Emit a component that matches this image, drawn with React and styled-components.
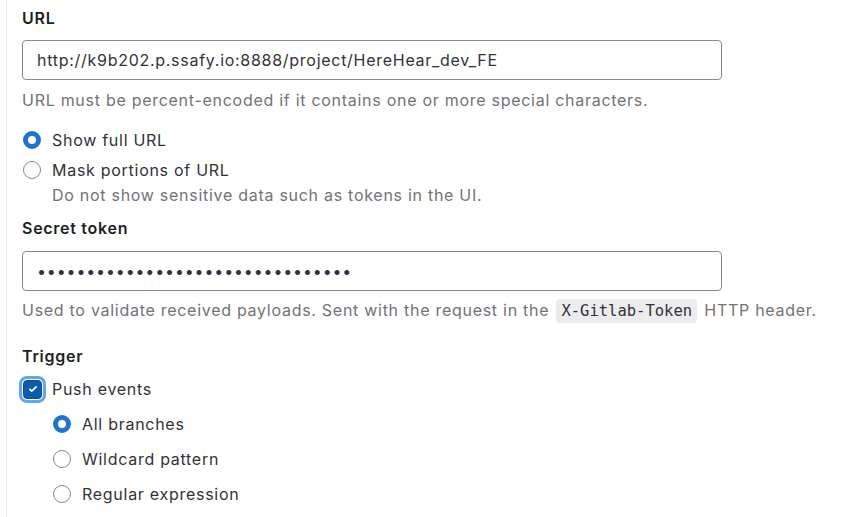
import React, { useState } from 'react';
import styled, { createGlobalStyle } from 'styled-components';

const GlobalStyle = createGlobalStyle`
  body {
    margin: 0;
    background: #fff;
    font-family: Inter, "Noto Sans", sans-serif;
    letter-spacing: 0.72px;
    color: #333238;
  }
`;

const Page = styled.div`
  margin-left: 6px;
  border-left: 1px solid #ececef;
  padding: 8px 0 20px 15px;
  min-height: 517px;
  box-sizing: border-box;
`;

const Group = styled.div`
  margin-top: ${(p) => p.$mt || 0}px;
`;

const Label = styled.div`
  font-size: 16px;
  font-weight: 600;
  line-height: 20px;
  color: #1f1e24;
  margin-bottom: ${(p) => p.$mb || 12}px;
`;

const Input = styled.input`
  display: block;
  box-sizing: border-box;
  width: 700px;
  height: 40px;
  padding: 0 14px;
  border: 1px solid #89888d;
  border-radius: 4px;
  font-family: Inter, sans-serif;
  font-size: 16px;
  letter-spacing: ${(p) => (p.type === 'password' ? '0.85px' : '0.72px')};
  color: #333238;
  outline: none;
`;

const Help = styled.div`
  font-size: 16px;
  line-height: 20px;
  color: #737278;
  margin-top: ${(p) => p.$mt || 0}px;
  margin-left: ${(p) => p.$indent || 0}px;
`;

const Code = styled.code`
  font-family: "DejaVu Sans Mono", "Liberation Mono", monospace;
  font-size: 15.5px;
  letter-spacing: 0;
  color: #333238;
  background: #ececef;
  border-radius: 4px;
  padding: 3px 5px;
  margin: 0 2px;
`;

const Option = styled.label`
  display: flex;
  align-items: center;
  gap: 11px;
  font-size: 16px;
  line-height: 20px;
  color: #333238;
  margin-top: ${(p) => p.$mt || 0}px;
  cursor: pointer;
`;

const RadioDot = styled.span`
  width: 18px;
  height: 18px;
  box-sizing: border-box;
  border-radius: 50%;
  flex-shrink: 0;
  margin-left: 1px;
  border: ${(p) => (p.$on ? '5px solid #1f75cb' : '1px solid #89888d')};
  background: #fff;
`;

const CheckBox = styled.span`
  width: 19px;
  height: 19px;
  box-sizing: border-box;
  border-radius: 4px;
  flex-shrink: 0;
  margin-left: 1px;
  margin-right: -1px;
  background: #0b5cad;
  border: 1px solid #0a4f95;
  box-shadow: 0 0 0 1px #fff, 0 0 0 4px #63a6e9;
  display: flex;
  align-items: center;
  justify-content: center;
`;

const Sub = styled.div`
  margin-left: 30px;
  margin-top: ${(p) => p.$mt || 0}px;
`;

function Radio({ on, children, ...rest }) {
  return (
    <Option {...rest}>
      <RadioDot $on={on} />
      <span>{children}</span>
    </Option>
  );
}

export default function App() {
  const [mask, setMask] = useState(false);
  const [branch, setBranch] = useState('all');

  return (
    <>
      <GlobalStyle />
      <Page>
        <Group>
          <Label>URL</Label>
          <Input defaultValue="http://k9b202.p.ssafy.io:8888/project/HereHear_dev_FE" />
          <Help $mt={10}>URL must be percent-encoded if it contains one or more special characters.</Help>
        </Group>

        <Group $mt={20}>
          <Radio on={!mask} onClick={() => setMask(false)}>Show full URL</Radio>
          <Radio $mt={10} on={mask} onClick={() => setMask(true)}>Mask portions of URL</Radio>
          <Help $mt={5} $indent={30}>Do not show sensitive data such as tokens in the UI.</Help>
        </Group>

        <Group $mt={13}>
          <Label $mb={13}>Secret token</Label>
          <Input type="password" defaultValue="••••••••••••••••••••••••••••••••" />
          <Help $mt={9}>
            Used to validate received payloads. Sent with the request in the <Code>X-Gitlab-Token</Code> HTTP header.
          </Help>
        </Group>

        <Group $mt={25}>
          <Label $mb={13}>Trigger</Label>
          <Option>
            <CheckBox>
              <svg width="10" height="10" viewBox="0 0 16 16">
                <path d="M3 8.5l3 3 7-7" stroke="#fff" strokeWidth="2.8" fill="none" strokeLinecap="round" strokeLinejoin="round" />
              </svg>
            </CheckBox>
            <span>Push events</span>
          </Option>
          <Sub $mt={15}>
            <Radio on={branch === 'all'} onClick={() => setBranch('all')}>All branches</Radio>
            <Radio $mt={15} on={branch === 'wild'} onClick={() => setBranch('wild')}>Wildcard pattern</Radio>
            <Radio $mt={15} on={branch === 'regex'} onClick={() => setBranch('regex')}>Regular expression</Radio>
          </Sub>
        </Group>
      </Page>
    </>
  );
}
